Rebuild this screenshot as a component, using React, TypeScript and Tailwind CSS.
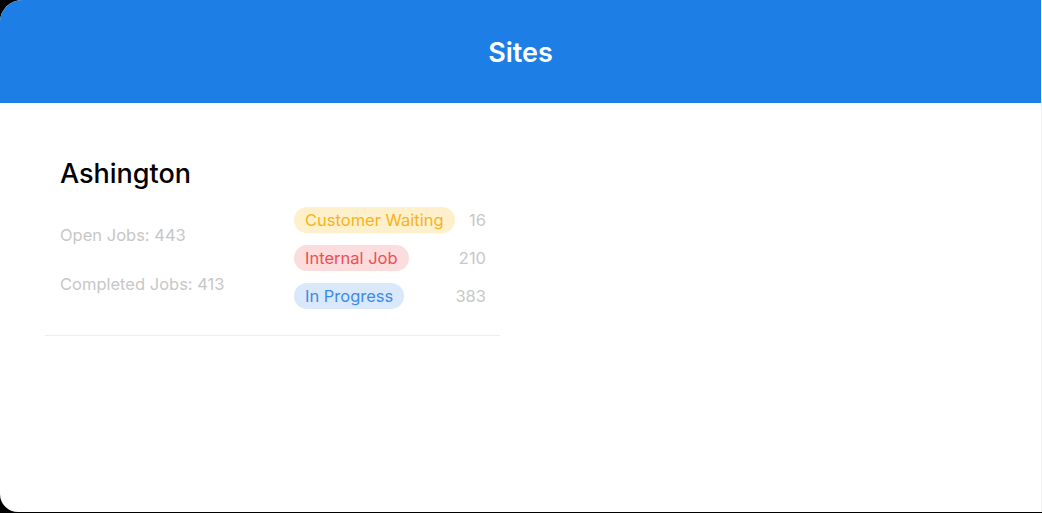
import React from 'react';

type Status = { label: string; count: number; pill: string };

const statuses: Status[] = [
  { label: 'Customer Waiting', count: 16, pill: 'bg-[#fff0cc] text-[#f5b41c]' },
  { label: 'Internal Job', count: 210, pill: 'bg-[#fcdcdc] text-[#ec4f55]' },
  { label: 'In Progress', count: 383, pill: 'bg-[#dae8fb] text-[#3d8be6]' },
];

export default function App() {
  return (
    <div className="w-[1042px] h-[513px] bg-black overflow-hidden" style={{ fontFamily: 'Inter, "Noto Sans", sans-serif' }}>
      <div className="h-[512px] bg-white rounded-tl-[22px] rounded-bl-[18px] overflow-hidden flex flex-col border-r border-[#f0f0f0]">
        <header className="h-[103px] shrink-0 bg-[#1d7fe6] flex items-center justify-center pt-[3px]">
          <h1 className="text-white text-[27px] font-semibold">Sites</h1>
        </header>

        <div className="w-[455px] ml-[45px] mt-[54px] pl-[15px] pr-[14px] pb-[26px] border-b border-[#eeeeee]">
          <h2 className="text-[27px] font-medium text-black leading-[34px]">Ashington</h2>
          <div className="flex justify-between mt-[16px]">
            <div className="flex flex-col gap-[26px] pt-[17px] text-[16.5px] text-[#c7c7c7] leading-[23px]">
              <span>Open Jobs: 443</span>
              <span>Completed Jobs: 413</span>
            </div>
            <div className="flex flex-col gap-[12px] w-[192px]">
              {statuses.map(s => (
                <div key={s.label} className="flex items-center justify-between">
                  <span className={`h-[26px] px-[11px] rounded-full flex items-center text-[16.5px] ${s.pill}`}>{s.label}</span>
                  <span className="text-[16.5px] text-[#c7c7c7]">{s.count}</span>
                </div>
              ))}
            </div>
          </div>
        </div>
      </div>
    </div>
  );
}
